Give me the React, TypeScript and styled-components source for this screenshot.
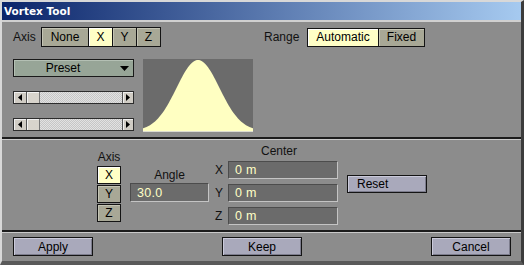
import * as React from "react";
import styled, { createGlobalStyle, css } from "styled-components";

const GlobalStyle = createGlobalStyle`
  html, body {
    margin: 0;
    padding: 0;
    background: #8c8c8c;
  }
  body {
    font-family: "Liberation Sans", Arial, sans-serif;
    font-size: 12px;
    color: #000;
  }
`;

const SWindow = styled.div`
  width: 524px;
  height: 265px;
  box-sizing: border-box;
  background: #8c8c8c;
  border-top: 2px solid #d8d8d8;
  border-left: 2px solid #d8d8d8;
  border-right: 3px solid #3c3c3c;
  border-bottom: 4px solid #5a5a5a;
  display: flex;
  flex-direction: column;
  overflow: hidden;
`;

const STitleBar = styled.div`
  height: 18px;
  flex: none;
  display: flex;
  align-items: center;
  padding-left: 2px;
  background: linear-gradient(to right, #0a246a, #a6caf0);
  border-bottom: 2px solid #d0d0d0;
  color: #fff;
  font-family: "DejaVu Sans", sans-serif;
  font-weight: 700;
  font-size: 10.5px;
`;

const STopPanel = styled.div`
  height: 115px;
  flex: none;
  box-sizing: border-box;
  padding: 5px 0 0 11px;
  display: flex;
  flex-direction: column;
`;

const SToolRow = styled.div`
  display: flex;
  align-items: center;
  height: 20px;
`;

const SLabel = styled.span`
  font-size: 12px;
  color: #111;
`;

const SAxisLabel = styled(SLabel)`
  width: 28px;
`;

const SRangeGroup = styled.div`
  display: flex;
  align-items: center;
  margin-left: 103px;
  height: 19px;
`;

const SRangeLabel = styled(SLabel)`
  width: 43px;
`;

const SSegment = styled.div`
  display: flex;
  height: 100%;
`;

const SToggle = styled.div<{ $w: number; $on?: boolean }>`
  width: ${(p) => p.$w}px;
  box-sizing: border-box;
  height: 100%;
  display: flex;
  align-items: center;
  justify-content: center;
  border: 1px solid #141414;
  margin-left: -1px;
  &:first-child {
    margin-left: 0;
  }
  background: ${(p) => (p.$on ? "#ffffc6" : "#a8a896")};
  box-shadow: inset 1px 1px 0 ${(p) => (p.$on ? "#ffffff" : "#c4c4b4")};
  font-size: 12px;
`;

const SToolBody = styled.div`
  display: flex;
  margin-top: 12px;
  gap: 9px;
`;

const SControls = styled.div`
  width: 121px;
  display: flex;
  flex-direction: column;
`;

const SPreset = styled.div`
  height: 18px;
  box-sizing: border-box;
  border: 1px solid #1a1a1a;
  background: #97a597;
  box-shadow: inset 1px 1px 0 #b4c0b4;
  display: flex;
  align-items: center;
  padding-right: 4px;
  font-size: 12px;
`;

const SPresetText = styled.span`
  flex: 1;
  text-align: center;
  padding-right: 8px;
`;

const SSlider = styled.div`
  height: 13px;
  margin-top: 14px;
  box-sizing: border-box;
  display: flex;
  border: 1px solid #2c2c2c;
  background: repeating-conic-gradient(#e2e2e2 0 25%, #c6c6c6 0 50%) 0 0 / 2px 2px;
`;

const SArrowBtn = styled.div<{ $w: number }>`
  width: ${(p) => p.$w}px;
  flex: none;
  box-sizing: border-box;
  background: #d0ccc4;
  border-right: 1px solid #555;
  box-shadow: inset 1px 1px 0 #f0f0f0;
  display: flex;
  align-items: center;
  justify-content: center;
  &:last-child {
    border-right: none;
    border-left: 1px solid #555;
  }
`;

const SThumb = styled.div`
  width: 13px;
  flex: none;
  box-sizing: border-box;
  background: #d8d4cc;
  border-right: 1px solid #777;
  box-shadow: inset 1px 1px 0 #f4f4f4;
`;

const STrack = styled.div`
  flex: 1;
`;

const SCurveBox = styled.div`
  width: 110px;
  height: 73px;
  background: #6b6b6b;
  border-bottom: 1px solid #dcdcd0;
  box-sizing: border-box;
  line-height: 0;
`;

const SSeparator = styled.div`
  height: 3px;
  flex: none;
  box-sizing: border-box;
  border-top: 2px solid #1c1c1c;
  border-bottom: 1px solid #cacaca;
`;

const SMiddlePanel = styled.div`
  height: 90px;
  flex: none;
  display: flex;
  padding-left: 95px;
`;

const SAxisColumn = styled.div`
  width: 24px;
  padding-top: 9px;
  display: flex;
  flex-direction: column;
  align-items: center;
`;

const SColLabel = styled.div`
  height: 16px;
  line-height: 16px;
  font-size: 12px;
  color: #111;
  text-align: center;
`;

const SStack = styled.div`
  display: flex;
  flex-direction: column;
  gap: 1px;
  margin-top: 1px;
  width: 100%;
`;

const SStackBtn = styled(SToggle)`
  height: 18px;
  margin-left: 0;
`;

const SAngleColumn = styled.div`
  width: 79px;
  margin-left: 9px;
  padding-top: 27px;
  display: flex;
  flex-direction: column;
`;

const SField = styled.div<{ $h: number }>`
  height: ${(p) => p.$h}px;
  box-sizing: border-box;
  background: #6b6b6b;
  border-top: 1px solid #4c4c4c;
  border-left: 1px solid #4c4c4c;
  border-right: 1px solid #c4c4c4;
  border-bottom: 1px solid #c4c4c4;
  color: #ffffc6;
  font-size: 12.5px;
  display: flex;
  align-items: center;
  padding-left: 6px;
  letter-spacing: 0.3px;
`;

const SCenterGroup = styled.div`
  margin-left: 6px;
  padding-top: 3px;
  display: flex;
  flex-direction: column;
`;

const SCenterLabel = styled(SColLabel)`
  padding-left: 5px;
`;

const SCoordRows = styled.div`
  margin-top: 2px;
  display: flex;
  flex-direction: column;
  gap: 5px;
`;

const SCoordRow = styled.div`
  display: flex;
  align-items: center;
`;

const SCoordLabel = styled.span`
  width: 13px;
  font-size: 12px;
  color: #111;
`;

const SCoordField = styled(SField)`
  width: 110px;
`;

const buttonBase = css`
  height: 19px;
  width: 80px;
  box-sizing: border-box;
  border: 1px solid #141414;
  background: #a9a9bb;
  box-shadow: inset 1px 1px 0 #cacada, inset -1px -1px 0 #7c7c8c;
  display: flex;
  align-items: center;
  font-size: 12px;
`;

const SReset = styled.div`
  ${buttonBase}
  height: 18px;
  margin-left: 9px;
  margin-top: 35px;
  padding-left: 9px;
`;

const SFooter = styled.div`
  height: 28px;
  flex: none;
  box-sizing: border-box;
  padding: 4px 10px 0 11px;
  display: flex;
  justify-content: space-between;
  align-items: flex-start;
`;

const SButton = styled.div`
  ${buttonBase}
  justify-content: center;
`;

const SmallTriangle = ({ dir }: { dir: "left" | "right" | "down" }) => {
  if (dir === "down") {
    return (
      <svg width="9" height="5" viewBox="0 0 9 5">
        <polygon points="0,0 9,0 4.5,5" fill="#000" />
      </svg>
    );
  }
  return (
    <svg width="4" height="7" viewBox="0 0 4 7">
      {dir === "left" ? (
        <polygon points="4,0 4,7 0,3.5" fill="#000" />
      ) : (
        <polygon points="0,0 0,7 4,3.5" fill="#000" />
      )}
    </svg>
  );
};

const Slider = () => (
  <SSlider>
    <SArrowBtn $w={13}>
      <SmallTriangle dir="left" />
    </SArrowBtn>
    <SThumb />
    <STrack />
    <SArrowBtn $w={11}>
      <SmallTriangle dir="right" />
    </SArrowBtn>
  </SSlider>
);

// gaussian falloff drawn across the preview box
const bellPath = () => {
  const w = 110;
  const base = 72;
  const sigma = 21.5;
  const pts: string[] = [`M0,${base}`];
  for (let x = 0; x <= w; x += 1) {
    const y = base - 71 * Math.exp(-((x - 55) ** 2) / (2 * sigma * sigma));
    pts.push(`L${x},${y.toFixed(2)}`);
  }
  pts.push(`L${w},${base} Z`);
  return pts.join(" ");
};

const Curve = () => (
  <SCurveBox>
    <svg width="110" height="72" viewBox="0 0 110 72">
      <path d={bellPath()} fill="#ffffc2" />
    </svg>
  </SCurveBox>
);

export default function App() {
  return (
    <>
      <GlobalStyle />
      <SWindow>
        <STitleBar>Vortex Tool</STitleBar>
        <STopPanel>
          <SToolRow>
            <SAxisLabel>Axis</SAxisLabel>
            <SSegment>
              <SToggle $w={48}>None</SToggle>
              <SToggle $w={25} $on>
                X
              </SToggle>
              <SToggle $w={25}>Y</SToggle>
              <SToggle $w={25}>Z</SToggle>
            </SSegment>
            <SRangeGroup>
              <SRangeLabel>Range</SRangeLabel>
              <SSegment>
                <SToggle $w={72} $on>
                  Automatic
                </SToggle>
                <SToggle $w={47}>Fixed</SToggle>
              </SSegment>
            </SRangeGroup>
          </SToolRow>
          <SToolBody>
            <SControls>
              <SPreset>
                <SPresetText>Preset</SPresetText>
                <SmallTriangle dir="down" />
              </SPreset>
              <Slider />
              <Slider />
            </SControls>
            <Curve />
          </SToolBody>
        </STopPanel>
        <SSeparator />
        <SMiddlePanel>
          <SAxisColumn>
            <SColLabel>Axis</SColLabel>
            <SStack>
              <SStackBtn $w={24} $on>
                X
              </SStackBtn>
              <SStackBtn $w={24}>Y</SStackBtn>
              <SStackBtn $w={24}>Z</SStackBtn>
            </SStack>
          </SAxisColumn>
          <SAngleColumn>
            <SColLabel>Angle</SColLabel>
            <SField $h={19}>30.0</SField>
          </SAngleColumn>
          <SCenterGroup>
            <SCenterLabel>Center</SCenterLabel>
            <SCoordRows>
              {["X", "Y", "Z"].map((axis) => (
                <SCoordRow key={axis}>
                  <SCoordLabel>{axis}</SCoordLabel>
                  <SCoordField $h={18}>0 m</SCoordField>
                </SCoordRow>
              ))}
            </SCoordRows>
          </SCenterGroup>
          <SReset>Reset</SReset>
        </SMiddlePanel>
        <SSeparator />
        <SFooter>
          <SButton>Apply</SButton>
          <SButton>Keep</SButton>
          <SButton>Cancel</SButton>
        </SFooter>
      </SWindow>
    </>
  );
}
